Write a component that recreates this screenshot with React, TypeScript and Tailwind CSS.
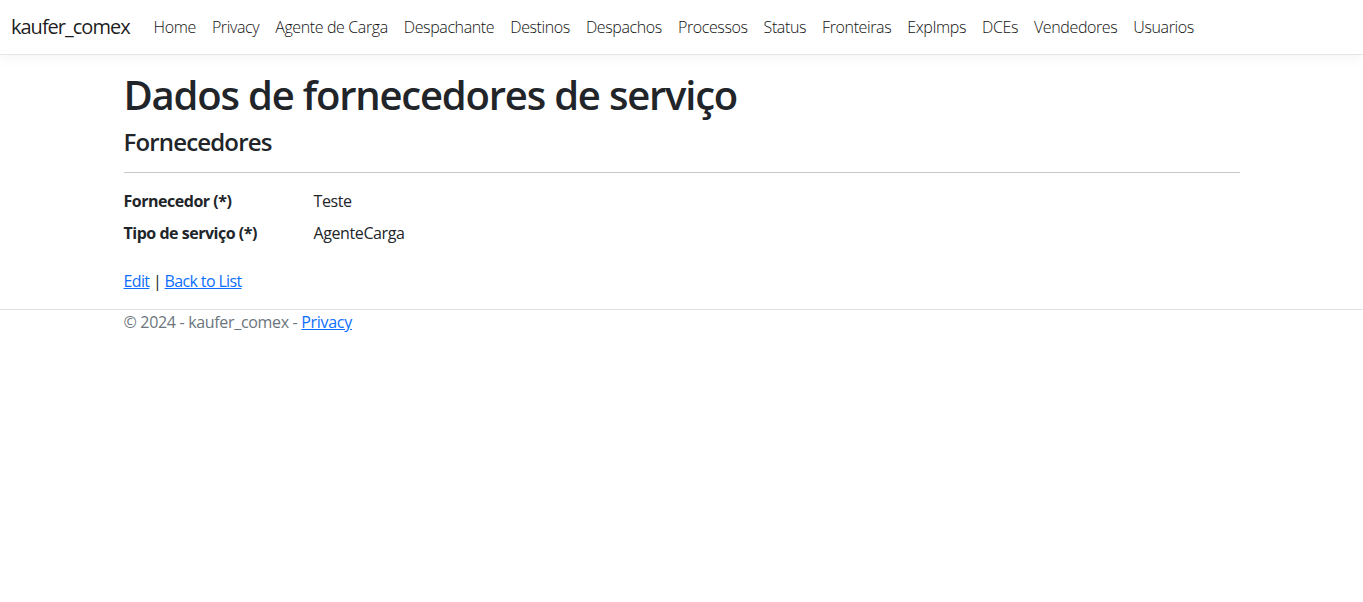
import React from 'react';

const navItems = [
  'Home',
  'Privacy',
  'Agente de Carga',
  'Despachante',
  'Destinos',
  'Despachos',
  'Processos',
  'Status',
  'Fronteiras',
  'ExpImps',
  'DCEs',
  'Vendedores',
  'Usuarios',
];

const App: React.FC = () => {
  return (
    <div className="min-h-[602px] bg-white text-[#212529] font-['Open_Sans',sans-serif] text-[16px] leading-[24px] tracking-[-0.02em]">
      <header>
        <nav className="h-[55px] border-b border-[#e5e5e5] shadow-[0_4px_12px_rgba(0,0,0,0.04)] flex items-center pl-[11px] pr-3">
          <a className="text-[20px] leading-[30px] text-[#000000e6] tracking-[-0.05em] mr-4">kaufer_comex</a>
          <ul className="flex">
            {navItems.map(item => (
              <li key={item}>
                <a className="block px-2 py-2 text-[#111111] font-light tracking-[-0.024em]">{item}</a>
              </li>
            ))}
          </ul>
        </nav>
      </header>

      <div className="w-[1140px] mx-auto px-3">
        <main className="pt-4 pb-4">
          <h1 className="text-[40px] leading-[48px] font-semibold tracking-[-0.03em] mb-2">Dados de fornecedores de serviço</h1>
          <div>
            <h4 className="text-[24px] leading-[29px] font-semibold tracking-[-0.035em] mb-2">Fornecedores</h4>
            <hr className="my-4 border-t border-[#c8c9ca]" />
            <dl className="grid grid-cols-[190px_1fr] mb-4">
              <dt className="font-bold mb-2 tracking-[-0.03em]">Fornecedor (*)</dt>
              <dd className="mb-2 tracking-[-0.025em]">Teste</dd>
              <dt className="font-bold mb-2 tracking-[-0.03em]">Tipo de serviço (*)</dt>
              <dd className="mb-2 tracking-[-0.025em]">AgenteCarga</dd>
            </dl>
          </div>
          <div className="tracking-[-0.04em]">
            <a className="text-[#0d6efd] underline">Edit</a> |{' '}
            <a className="text-[#0d6efd] underline">Back to List</a>
          </div>
        </main>
      </div>

      <footer className="border-t border-[#dee2e6] text-[#6c757d]">
        <div className="w-[1140px] mx-auto px-3">
          &copy; 2024 - kaufer_comex - <a className="text-[#0d6efd] underline">Privacy</a>
        </div>
      </footer>
    </div>
  );
};

export default App;
